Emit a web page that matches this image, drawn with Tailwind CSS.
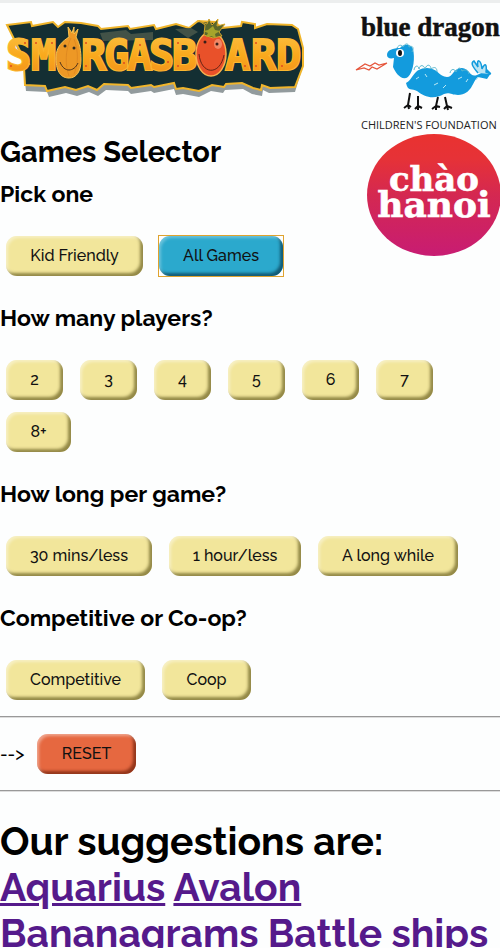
<!DOCTYPE html>
<html lang="en">
<head>
<meta charset="utf-8">
<meta name="viewport" content="width=device-width, initial-scale=1">
<title>Games Selector</title>
<script src="https://cdn.jsdelivr.net/npm/@tailwindcss/browser@4"></script>
<style>
.btn{height:40px;border-radius:11px;background:#f2e69b;text-align:center;color:#111;white-space:nowrap;box-shadow:inset 2px 2px 3px rgba(255,255,255,.4),inset -3px -3px 3px rgba(70,60,0,.55)}
.btn.blue{background:#2ba9cd;box-shadow:inset 2px 2px 3px rgba(255,255,255,.3),inset -3px -3px 3px rgba(0,40,60,.6)}
.btn.red{background:#e66840;box-shadow:inset 2px 2px 3px rgba(255,255,255,.4),inset -3px -3px 3px rgba(90,20,0,.6)}
</style>
</head>
<body class="bg-[#fdfefe] overflow-x-hidden text-black text-base font-medium font-[Raleway,Lato,sans-serif]">
<div class="h-[3px] bg-[#eceeee]"></div>
<header class="flex justify-between items-start">
  <div class="min-w-0 flex-1">
    <svg class="block w-[312px] h-[97px]" viewBox="0 3 312 97" role="img" aria-label="Smorgasboard">
      <defs><linearGradient id="gold" x1="0" y1="0" x2="0" y2="1"><stop offset="0" stop-color="#fbc044"/><stop offset=".5" stop-color="#f9a91c"/><stop offset="1" stop-color="#f28c1c"/></linearGradient></defs>
      <path d="M10 31l24-4 1 4 20-5 3 5 7-5 18 1 16 3 1 3 27-3 2 3 24-4 2 4 22-5 13 4 8-7 18 1 6 6 21-2 1-4 13 2v4l12-4 25 1 9 23-1 17-7 23-26 1-6-3-1 6-10-2-9-5-18 1-2 3-12-2-12 6-16-3-7 1-2-6-20 4-3-2-20 3-3-3-22-1-8 6-9-4-12 4-11-3-17 4-2-5-21-1-2-18 6-3-7-7z" fill="#929b9d"/>
      <path d="M7 25l24-3 1 4 21-4 5 5 7-5 16 1 17 3 3 3 27-3 2 3 24-4 2 4 20-5 13 4 9-7 17 1 7 6 19-2 1-4 13 2v4l12-4 25 1 6 4 5 19v18l-8 21-25 1-8-3-1 5-8-2-11-5-16 1-2 3-12-2-13 6-16-3-7 1-2-6-20 4-3-2-20 3-3-3-24-1-7 6-9-4-12 4-11-3-18 4-2-5-20-1-1-18 5-3-6-7z" fill="#142f33" stroke="#f0b52b" stroke-width="2"/>
      <path d="M100 33l26-3 5 4 22-2v8l-50 1zM175 29l16-1 7 4-10 6z" fill="#425247"/>
      <g font-family="'DejaVu Sans Mono',monospace" font-weight="700" font-size="42" fill="url(#gold)" stroke="#fbb830" stroke-width="2" paint-order="stroke" stroke-linejoin="miter">
        <text y="70" x="6">S</text><text y="70" x="31">M</text><text y="70" x="81">R</text><text y="70" x="104">G</text><text y="70" x="127">A</text><text y="70" x="149">S</text><text y="70" x="172">B</text><text y="70" x="225">A</text><text y="70" x="251">R</text><text y="70" x="276">D</text>
      </g>
      <path d="M69 37l-1-10 4 6 2-6 0 7 4-5-2 8c4 7 5 14 5 23 0 12-5 18-12 18S56 73 56 58c0-12 7-17 13-21z" fill="#ed9825" stroke="#fac44e"/>
      <path d="M71 38c-6 12-6 27-2 38M74 39c5 13 4 26 0 35" fill="none" stroke="#d57d1e" opacity=".55"/>
      <path d="M60 62c4 11 14 10 18 1" fill="none" stroke="#50341b"/><circle cx="65" cy="46" r="1.5" fill="#30291d"/><circle cx="74" cy="48" r="1.5" fill="#30291d"/>
      <ellipse cx="211" cy="54" rx="15" ry="22" fill="#e9512a" stroke="#f9b04e" stroke-width="1.5"/>
      <path d="M209 19l3 6 6-6-1 7 8-2-6 8 3 4-9 2-9-3 1-10-6-4 8 3z" fill="#5b672c" stroke="#d5a52b"/><path d="M208 30l5-4 2 4 5 1-5 3 1 4-5-2-5 1 2-4-5-2z" fill="#a5a52b"/>
      <ellipse cx="218" cy="44" rx="4" ry="5" fill="#f28764"/><path d="M199 54c2 21 21 22 25 1" fill="none" stroke="#682416"/><circle cx="205" cy="42" r="1.5" fill="#381e19"/><circle cx="217" cy="44" r="1.5" fill="#381e19"/>
      <g fill="#df4b1e"><circle cx="25" cy="43" r="1"/><circle cx="11" cy="66" r="1"/><circle cx="36" cy="43" r="1"/><circle cx="52" cy="43" r="1"/><circle cx="86" cy="43" r="1"/><circle cx="86" cy="66" r="1"/><circle cx="124" cy="63" r="1"/><circle cx="140" cy="45" r="1"/><circle cx="168" cy="62" r="1"/><circle cx="178" cy="66" r="1"/><circle cx="178" cy="43" r="1"/><circle cx="245" cy="66" r="1"/><circle cx="256" cy="43" r="1"/><circle cx="256" cy="66" r="1"/><circle cx="282" cy="66" r="1"/></g>
    </svg>
    <h1 class="mt-[34px] text-[29px] leading-9 font-bold whitespace-nowrap">Games Selector</h1>
    <h2 class="mt-2 text-[23px] leading-8 font-bold">Pick one</h2>
    <div class="mt-[26px] ml-[6px] flex gap-4">
      <button class="btn w-[137px]">Kid Friendly</button><div class="flex outline outline-[#dfa32f]"><button class="btn blue w-[124px]">All Games</button></div>
    </div>
  </div>
  <div class="w-[145px] shrink-0">
    <svg class="block w-full h-[129px]" viewBox="355 3 145 129" role="img" aria-label="Blue Dragon Children's Foundation">
      <text x="361" y="36" font-family="'Liberation Serif',serif" font-weight="700" font-size="27" fill="#111" stroke="#111" stroke-width=".5">blue dragon</text>
      <path d="M387 55c0-5 6-7 13-7 4-5 11-4 13 1 2 8 1 22-5 28-6 4-12-3-15-10l1-9c-4 1-7 0-7-3z" fill="#139bdd"/>
      <path d="M406 83c7-3 7-15 21-15 11 0 12 9 20 9 6 0 7-10 15-9 8 1 8 10 15 7 5-2 7-4 10-6l4 4-4 6-9-2c-5 3-6 18-20 18-7 0-8-3-14-1-10 6-20 3-27-3-5-3-9 1-11-8z" fill="#139bdd"/>
      <path d="M478 73c-5-6-8-10-4-12l4 6c-2-9 3-8 4 2 3-7 5-5 4 3l5 2" fill="#bce4f3" stroke="#139bdd" stroke-width="1.5"/>
      <path d="M397 48c2-4 5-3 6-1 3-5 6-3 6 0 4-2 5 1 3 5M414 70c1-6 5-4 5-1 1-5 5-4 6 0 2-6 6-4 6 0 4-3 6-1 6 3M450 73c1-5 5-4 6-1 2-5 5-5 6-1 4-2 6-1 7 3" fill="none" stroke="#59b7cf"/>
      <path d="M416 79l3-2M425 74l2 3M434 85l4-2M443 88l3-3M458 79l4-2M466 82l2-3M476 80l3-3" stroke="#bde9f3"/>
      <ellipse cx="400" cy="53" rx="4" ry="4" fill="white"/><ellipse cx="400" cy="53" rx="2" ry="3" fill="#111"/>
      <path d="M387 63l-10 6-5-2-3 3-5-2-8 2 9-6 5 2 5-3 4 2 8-2" fill="none" stroke="#e5543a" stroke-width="1.2"/>
      <path d="M410 93l-2 12-4 3m4-3 1 4m-1-4 3 2M418 96v10l-3 3m3-3v4m0-4 4 2M438 97l-2 9-4 3m4-3v4m0-4 4 1M445 97l2 9-3 3m3-3 1 4m-1-4 5 2" fill="none" stroke="#111" stroke-width="2"/>
      <text x="361" y="129" font-family="'Open Sans',sans-serif" font-size="11" fill="#222">CHILDREN'S FOUNDATION</text>
    </svg>
    <svg class="block w-full h-[124px]" viewBox="355 132 145 124" role="img" aria-label="Chào Hanoi">
      <defs><linearGradient id="sunset" x1="0" y1="0" x2="0" y2="1"><stop stop-color="#e93230"/><stop offset=".2" stop-color="#e63237"/><stop offset=".5" stop-color="#d42851"/><stop offset="1" stop-color="#c81c73"/></linearGradient></defs>
      <ellipse cx="434" cy="195" rx="67" ry="61" fill="url(#sunset)"/>
      <g font-family="'DejaVu Serif','Liberation Serif',serif" font-weight="700" fill="white" stroke="white" stroke-width=".6" text-anchor="middle"><text x="434" y="191" font-size="34">chào</text><text x="434" y="217" font-size="36">hanoi</text></g>
    </svg>
  </div>
</header>
<main>
  <h2 class="mt-[26px] text-[23px] leading-8 font-bold">How many players?</h2>
  <div class="mt-[26px] ml-[6px] flex flex-wrap gap-x-[17px] gap-y-3">
    <button class="btn w-[57px]">2</button><button class="btn w-[57px]">3</button><button class="btn w-[57px]">4</button><button class="btn w-[57px]">5</button><button class="btn w-[57px]">6</button><button class="btn w-[57px]">7</button><button class="btn w-[65px]">8+</button>
  </div>
  <h2 class="mt-[26px] text-[23px] leading-8 font-bold">How long per game?</h2>
  <div class="mt-[26px] ml-[6px] flex flex-wrap gap-[17px]">
    <button class="btn w-[146px]">30 mins/less</button><button class="btn w-[132px]">1 hour/less</button><button class="btn w-[140px]">A long while</button>
  </div>
  <h2 class="mt-[26px] text-[23px] leading-8 font-bold">Competitive or Co-op?</h2>
  <div class="mt-[26px] ml-[6px] flex gap-[17px]">
    <button class="btn w-[139px]">Competitive</button><button class="btn w-[89px]">Coop</button>
  </div>
  <hr class="mt-4 border-t border-b border-t-[#999] border-b-[#ddd]">
  <div class="my-4 flex items-center gap-[10px]"><span class="w-[27px] whitespace-nowrap text-lg">--&gt;</span><button class="btn red w-[99px]">RESET</button></div>
  <hr class="border-t border-b border-t-[#999] border-b-[#ddd]">
  <section class="mt-[26px] text-[39px] leading-[46px] font-bold">
    <h2>Our suggestions are:</h2>
    <p class="text-[#551a8b]"><a class="underline" href="#aquarius">Aquarius</a> <a class="underline" href="#avalon">Avalon</a> <a class="underline" href="#bananagrams">Bananagrams</a> <a class="underline" href="#battleships">Battle ships</a></p>
  </section>
</main>
</body>
</html>
